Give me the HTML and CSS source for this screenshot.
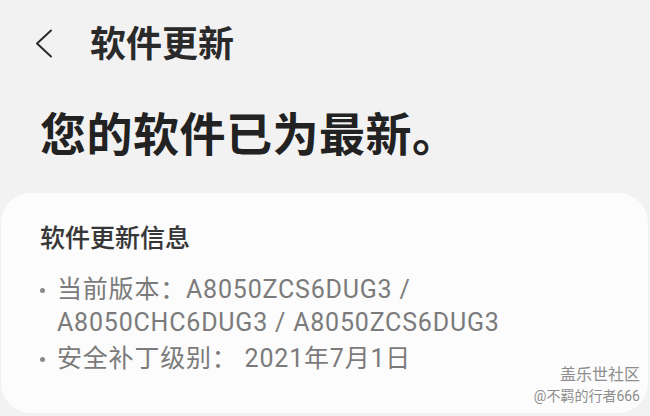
FILE: index.html
```html
<!DOCTYPE html>
<html lang="zh-CN">
<head>
<meta charset="utf-8">
<title>软件更新</title>
<link rel="stylesheet" href="styles.css">
</head>
<body>
<div class="topbar">
	<a class="back" href="#">
		<svg width="18" height="30" viewBox="0 0 18 30"><path d="M16 1.5 L2 14.5 L16 27.5" fill="none" stroke="#2b2b2b" stroke-width="2" stroke-linecap="round" stroke-linejoin="round"/></svg>
	</a>
	<span class="title">软件更新</span>
</div>

<h1 class="status">您的软件已为最新。</h1>

<div class="card">
	<h2 class="card_title">软件更新信息</h2>
	<ul class="info">
		<li><span class="dot"></span><span class="txt">当前版本：A8050ZCS6DUG3 / A8050CHC6DUG3 / A8050ZCS6DUG3</span></li>
		<li><span class="dot"></span><span class="txt">安全补丁级别： 2021年7月1日</span></li>
	</ul>
</div>

<div class="mark">
	<p class="mark_name">盖乐世社区</p>
	<p class="mark_user">@不羁的行者666</p>
</div>
</body>
</html>
```

FILE: styles.css
```css
*{ padding:0; margin:0;}
ul{ list-style:none;}

body{ background:#f2f2f2; font-family:Roboto, "Noto Sans CJK SC", sans-serif; width:650px; height:416px; overflow:hidden; position:relative;}

.topbar{ display:flex; align-items:center; height:90px; padding-left:35px;}
.topbar .back{ display:block; width:18px; height:30px; margin-top:-2px;}
.topbar .back svg{ display:block;}
.topbar .title{ margin-left:37px; font-size:36px; font-weight:700; color:#2a2a2a; line-height:40px;}

.status{ padding-left:40px; font-size:46px; font-weight:700; letter-spacing:0.5px; color:#222; line-height:90px;}

.card{ background:#fcfcfc; border-radius:30px; margin:13px 2px 0 1px; padding:28px 39px 38px;}
.card_title{ font-size:25px; font-weight:500; color:#363636; line-height:36px; -webkit-text-stroke:0.15px #363636;}

.info{ margin-top:16px; font-size:25px; color:#7b7b7b; line-height:33px;}
.info li{ display:flex; margin-bottom:3px;}
.info li:last-child{ margin-bottom:0;}
.info .dot{ flex:none; width:5px; height:5px; border-radius:50%; background:#8a8a8a; margin:15px 12px 0 0;}
.info .txt{ width:455px; letter-spacing:0.8px;}

/* 水印 */
.mark{ position:absolute; right:10px; bottom:10px; text-align:right; color:#8d8d8d;}
.mark_name{ font-size:16px; line-height:22px;}
.mark_user{ font-size:14px; line-height:20px;}
```
